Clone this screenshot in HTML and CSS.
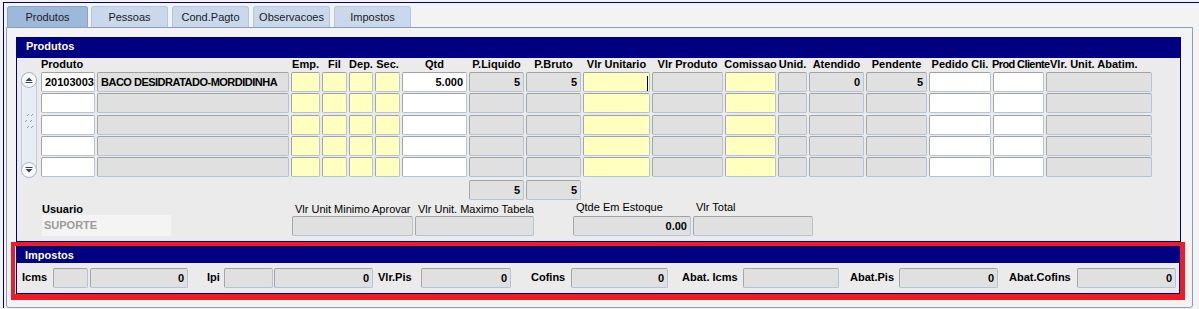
FILE: index.html
```html
<!DOCTYPE html>
<html lang="pt">
<head>
<meta charset="utf-8">
<title>Produtos</title>
<link rel="stylesheet" href="styles.css">
</head>
<body>
<div class="window">
  <div class="tabstrip">
    <div class="tab active">Produtos</div>
    <div class="tab">Pessoas</div>
    <div class="tab">Cond.Pagto</div>
    <div class="tab">Observacoes</div>
    <div class="tab">Impostos</div>
  </div>
  <div class="tabpanel">
    <section class="panel prod">
      <div class="ph">Produtos</div>
      <div class="grid">
        <div class="scroll">
          <svg width="16" height="106" viewBox="0 0 16 106">
            <rect x="0.5" y="0.5" width="15" height="105" rx="7.5" fill="#e7edf5" stroke="#c0ccda"/>
            <rect x="0.5" y="0.5" width="15" height="15" rx="7.5" fill="#f6f8fb" stroke="#a9b8ca"/>
            <path d="M4.5 9 L8 5.5 L11.5 9 Z" fill="#3b4757"/>
            <path d="M4.5 10.5 H11.5" stroke="#3b4757" stroke-width="1"/>
            <rect x="0.5" y="90.5" width="15" height="15" rx="7.5" fill="#f6f8fb" stroke="#a9b8ca"/>
            <path d="M4.5 97 L8 100.5 L11.5 97 Z" fill="#3b4757"/>
            <path d="M4.5 95.5 H11.5" stroke="#3b4757" stroke-width="1"/>
            <g fill="#8b99aa">
              <rect x="6" y="43" width="1" height="1"/><rect x="7" y="42" width="1" height="1"/>
              <rect x="10" y="43" width="1" height="1"/><rect x="11" y="42" width="1" height="1"/>
              <rect x="4" y="49" width="1" height="1"/><rect x="5" y="48" width="1" height="1"/>
              <rect x="9" y="49" width="1" height="1"/><rect x="10" y="48" width="1" height="1"/>
              <rect x="6" y="55" width="1" height="1"/><rect x="7" y="54" width="1" height="1"/>
              <rect x="10" y="55" width="1" height="1"/><rect x="11" y="54" width="1" height="1"/>
            </g>
          </svg>
        </div>

        <div></div>
        <div class="lbl left">Produto</div>
        <div class="lbl"></div>
        <div class="lbl">Emp.</div>
        <div class="lbl">Fil</div>
        <div class="lbl">Dep.</div>
        <div class="lbl">Sec.</div>
        <div class="lbl">Qtd</div>
        <div class="lbl">P.Liquido</div>
        <div class="lbl">P.Bruto</div>
        <div class="lbl">Vlr Unitario</div>
        <div class="lbl">Vlr Produto</div>
        <div class="lbl">Comissao</div>
        <div class="lbl">Unid.</div>
        <div class="lbl">Atendido</div>
        <div class="lbl">Pendente</div>
        <div class="lbl">Pedido Cli.</div>
        <div class="lbl left tight">Prod Cliente</div>
        <div class="lbl left pad">Vlr. Unit. Abatim.</div>

        <div class="f w">20103003</div>
        <div class="f g narrow">BACO DESIDRATADO-MORDIDINHA</div>
        <div class="f y"></div><div class="f y"></div><div class="f y"></div><div class="f y"></div>
        <div class="f w r">5.000</div>
        <div class="f g r">5</div>
        <div class="f g r">5</div>
        <div class="f y r"><span class="caret"></span></div>
        <div class="f g"></div>
        <div class="f y"></div>
        <div class="f g"></div>
        <div class="f g r">0</div>
        <div class="f g r">5</div>
        <div class="f w"></div>
        <div class="f w"></div>
        <div class="f g"></div>

        <div class="f w"></div><div class="f g"></div>
        <div class="f y"></div><div class="f y"></div><div class="f y"></div><div class="f y"></div>
        <div class="f w"></div><div class="f g"></div><div class="f g"></div>
        <div class="f y"></div><div class="f g"></div><div class="f y"></div>
        <div class="f g"></div><div class="f g"></div><div class="f g"></div>
        <div class="f w"></div><div class="f w"></div><div class="f g"></div>

        <div class="f w"></div><div class="f g"></div>
        <div class="f y"></div><div class="f y"></div><div class="f y"></div><div class="f y"></div>
        <div class="f w"></div><div class="f g"></div><div class="f g"></div>
        <div class="f y"></div><div class="f g"></div><div class="f y"></div>
        <div class="f g"></div><div class="f g"></div><div class="f g"></div>
        <div class="f w"></div><div class="f w"></div><div class="f g"></div>

        <div class="f w"></div><div class="f g"></div>
        <div class="f y"></div><div class="f y"></div><div class="f y"></div><div class="f y"></div>
        <div class="f w"></div><div class="f g"></div><div class="f g"></div>
        <div class="f y"></div><div class="f g"></div><div class="f y"></div>
        <div class="f g"></div><div class="f g"></div><div class="f g"></div>
        <div class="f w"></div><div class="f w"></div><div class="f g"></div>

        <div class="f w"></div><div class="f g"></div>
        <div class="f y"></div><div class="f y"></div><div class="f y"></div><div class="f y"></div>
        <div class="f w"></div><div class="f g"></div><div class="f g"></div>
        <div class="f y"></div><div class="f g"></div><div class="f y"></div>
        <div class="f g"></div><div class="f g"></div><div class="f g"></div>
        <div class="f w"></div><div class="f w"></div><div class="f g"></div>

        <div class="f g r tot-liq">5</div>
        <div class="f g r tot-bruto">5</div>
      </div>

      <div class="bottom">
        <div class="grp">
          <div class="bl b">Usuario</div>
          <div class="user">SUPORTE</div>
        </div>
        <div class="grp">
          <div class="bl">Vlr Unit Minimo Aprovar</div>
          <div class="f g bw-min"></div>
        </div>
        <div class="grp">
          <div class="bl">Vlr Unit. Maximo Tabela</div>
          <div class="f g bw-max"></div>
        </div>
        <div class="grp">
          <div class="bl up">Qtde Em Estoque</div>
          <div class="f g r bw-est">0.00</div>
        </div>
        <div class="grp">
          <div class="bl up">Vlr Total</div>
          <div class="f g bw-tot"></div>
        </div>
      </div>
    </section>

    <section class="panel imp">
      <div class="ph sm">Impostos</div>
      <div class="improw">
        <div class="il">Icms</div>
        <div class="f g iw35"></div>
        <div class="f g r iw98">0</div>
        <div class="il">Ipi</div>
        <div class="f g iw49"></div>
        <div class="f g r iw99">0</div>
        <div class="il">Vlr.Pis</div>
        <div class="f g r iw90">0</div>
        <div class="il">Cofins</div>
        <div class="f g r iw97">0</div>
        <div class="il">Abat. Icms</div>
        <div class="f g iw96"></div>
        <div class="il">Abat.Pis</div>
        <div class="f g r iw99">0</div>
        <div class="il">Abat.Cofins</div>
        <div class="f g r iw99">0</div>
      </div>
      <div class="annot"></div>
    </section>
  </div>
</div>
</body>
</html>
```

FILE: styles.css
```css
html, body {
  margin: 0;
  padding: 0;
  background: #f3f3f3;
  font-family: "Liberation Sans", Arial, sans-serif;
  font-size: 11px;
  color: #000;
}

.window {
  margin: 2px 0 0 3px;
  border-top: 1px solid #000080;
  border-left: 1px solid #000080;
  height: 306px;
  box-sizing: border-box;
}

/* tabs */
.tabstrip {
  display: flex;
  align-items: flex-end;
  padding: 3px 0 0 3px;
  height: 24px;
  box-sizing: border-box;
}
.tab {
  width: 77px;
  height: 21px;
  box-sizing: border-box;
  margin-right: 4px;
  border: 1px solid #b4c6dc;
  border-bottom: none;
  border-radius: 3px 3px 0 0;
  background: #c9d9eb;
  font-size: 11px;
  line-height: 20px;
  text-align: center;
  color: #1b1b1b;
}
.tab.active {
  width: 81px;
  margin-right: 3px;
  background: #9cb9d9;
  border-color: #86a4c8;
}

.tabpanel {
  margin-left: 2px;
  width: 1187px;
  box-sizing: border-box;
  border: 1px solid #8c9db6;
  border-radius: 0 0 3px 3px;
  padding: 9px 11px 13px 9px;
  background: #f3f3f3;
}

/* panels */
.panel {
  border: 1px solid #000080;
  background: #ebebeb;
  box-sizing: border-box;
}
.prod {
  width: 1165px;
}
.imp {
  width: 1164px;
  margin-top: 4px;
  position: relative;
}
.ph {
  background: #000080;
  color: #fff;
  font-weight: bold;
  font-size: 11px;
  height: 20px;
  line-height: 16px;
  padding-left: 9px;
  box-sizing: border-box;
}
.ph.sm {
  height: 16px;
  padding-left: 8px;
}

/* product grid */
.grid {
  display: grid;
  padding-left: 4px;
  grid-template-columns: 18px 54px 192px 29px 25px 24px 25px 65px 55px 55px 67px 71px 51px 29px 55px 61px 62px 51px 106px;
  grid-template-rows: 14px 21px 22px 21px 21px 23px 20px;
  column-gap: 2px;
}
.scroll {
  grid-column: 1;
  grid-row: 2 / span 5;
  line-height: 0;
}
.lbl {
  display: flex;
  justify-content: center;
  white-space: nowrap;
  font-weight: bold;
  line-height: 12px;
  height: 12px;
}
.lbl.left {
  justify-content: flex-start;
}
.lbl.tight {
  letter-spacing: -0.6px;
  margin-left: -1px;
}
.lbl.pad {
  padding-left: 4px;
}

.f {
  height: 20px;
  box-sizing: border-box;
  border: 1px solid;
  border-color: #a2a2a2 #b3c4d9 #b3c4d9 #a6a6a6;
  border-radius: 2px;
  font-weight: bold;
  font-size: 11px;
  line-height: 18px;
  padding: 0 3px;
  white-space: nowrap;
  overflow: hidden;
  align-self: start;
}
.f.narrow {
  letter-spacing: -0.5px;
}
.w { background: #ffffff; }
.g { background: #e0e0e0; }
.y { background: #ffffc0; }
.r { text-align: right; }

.caret {
  display: inline-block;
  width: 1px;
  height: 15px;
  background: #000;
  vertical-align: middle;
  margin-right: -2px;
}

.tot-liq { grid-column: 9; grid-row: 7; }
.tot-bruto { grid-column: 10; grid-row: 7; }

/* bottom of produtos */
.bottom {
  display: grid;
  grid-template-columns: 250px 123px 158px 120px 120px;
  padding: 3px 0 5px 25px;
}
.grp {
  display: flex;
  flex-direction: column;
}
.bl {
  height: 12px;
  line-height: 12px;
  margin-bottom: 1px;
  padding-left: 3px;
  white-space: nowrap;
}
.bl.b {
  font-weight: bold;
  padding-left: 0;
}
.bl.up {
  position: relative;
  top: -2px;
}
.user {
  width: 129px;
  height: 21px;
  background: #f4f4f4;
  color: #9b9b9b;
  font-weight: bold;
  line-height: 20px;
  padding-left: 2px;
  box-sizing: border-box;
  margin-top: -1px;
}
.bw-min { width: 121px; }
.bw-max { width: 119px; }
.bw-est { width: 118px; }
.bw-tot { width: 120px; }

/* impostos */
.improw {
  display: grid;
  grid-template-columns: 31px 37px 117px 17px 50px 104px 43px 110px 40px 111px 61px 107px 49px 110px 68px 99px;
  align-items: center;
  height: 30px;
  padding-left: 5px;
}
.improw .f { align-self: center; }
.il {
  font-weight: bold;
  white-space: nowrap;
  margin-top: -2px;
}
.iw35 { width: 35px; }
.iw49 { width: 49px; }
.iw90 { width: 90px; }
.iw96 { width: 96px; }
.iw97 { width: 97px; }
.iw98 { width: 98px; }
.iw99 { width: 99px; }

/* red highlight annotation drawn over the Impostos block */
.annot {
  position: absolute;
  left: -6px;
  top: -5px;
  right: -6px;
  bottom: -7px;
  border: solid #ee1c25;
  border-width: 4px 5px 6px 4px;
  pointer-events: none;
}
```
